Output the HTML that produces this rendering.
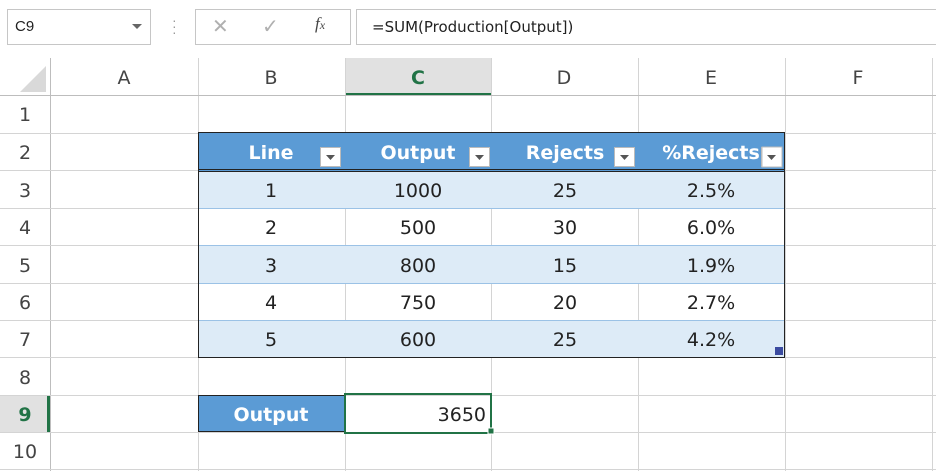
<!DOCTYPE html>
<html><head><style>
body{margin:0;width:936px;height:471px;background:#fff;font-family:"Liberation Sans",sans-serif;position:relative;overflow:hidden}
.a{position:absolute;box-sizing:border-box}
.t{font-family:"DejaVu Sans","Liberation Sans",sans-serif}
</style></head><body>
<div class="a" style="left:0;top:0;width:936px;height:56px;background:#fff"></div>
<div class="a" style="left:7px;top:9px;width:144px;height:36px;border:1px solid #c6c6c6"></div>
<div class="a" style="left:15px;top:18px;font-size:15px;color:#222">C9</div>
<div class="a" style="left:132px;top:24px;width:0;height:0;border-left:5px solid transparent;border-right:5px solid transparent;border-top:5px solid #666"></div>
<div class="a" style="left:172px;top:17px;color:#999;font-size:14px;line-height:6px">·<br>·<br>·</div>
<div class="a" style="left:195px;top:9px;width:156px;height:36px;border:1px solid #c6c6c6"></div>
<div class="a" style="left:212px;top:14px;font-size:20px;color:#b0b0b0">✕</div>
<div class="a" style="left:262px;top:14px;font-size:20px;color:#b0b0b0">✓</div>
<div class="a" style="left:315px;top:14px;font-size:17px;color:#444;font-style:italic;font-family:'Liberation Serif',serif">f<span style="font-size:12px">x</span></div>
<div class="a" style="left:356px;top:9px;width:590px;height:36px;border:1px solid #c6c6c6"></div>
<div class="a t" style="left:372px;top:18px;font-size:15px;color:#222">=SUM(Production[Output])</div>

<svg class="a" style="left:0;top:58px" width="936" height="413">
<rect x="0" y="0" width="936" height="38" fill="#fff"/>
<rect x="0" y="0" width="50" height="413" fill="#fff"/>
<polygon points="46,8 46,34 20,34" fill="#d9d9d9"/>
<rect x="345" y="0" width="146" height="38" fill="#e1e1e1"/>
<rect x="345" y="35" width="146" height="3" fill="#217346"/>
<rect x="0" y="337" width="50" height="37" fill="#e1e1e1"/>
<rect x="47" y="337" width="3" height="37" fill="#217346"/>
<g stroke="#d4d4d4" stroke-width="1">
<line x1="50.5" y1="0" x2="50.5" y2="413" stroke="#bdbdbd"/>
<line x1="198.5" y1="0" x2="198.5" y2="413"/><line x1="345.5" y1="0" x2="345.5" y2="413"/>
<line x1="491.5" y1="0" x2="491.5" y2="413"/><line x1="638.5" y1="0" x2="638.5" y2="413"/>
<line x1="785.5" y1="0" x2="785.5" y2="413"/><line x1="932.5" y1="0" x2="932.5" y2="413"/>
<line x1="0" y1="37.5" x2="936" y2="37.5" stroke="#bdbdbd"/>
<line x1="0" y1="75.5" x2="936" y2="75.5"/><line x1="0" y1="112.5" x2="936" y2="112.5"/>
<line x1="0" y1="150.5" x2="936" y2="150.5"/><line x1="0" y1="187.5" x2="936" y2="187.5"/>
<line x1="0" y1="225.5" x2="936" y2="225.5"/><line x1="0" y1="262.5" x2="936" y2="262.5"/>
<line x1="0" y1="299.5" x2="936" y2="299.5"/><line x1="0" y1="337.5" x2="936" y2="337.5"/>
<line x1="0" y1="374.5" x2="936" y2="374.5"/><line x1="0" y1="411.5" x2="936" y2="411.5"/>
</g>
<rect x="198" y="75" width="587" height="38" fill="#5b9bd5"/>
<rect x="198" y="113" width="587" height="37" fill="#ddebf7"/>
<rect x="198" y="188" width="587" height="37" fill="#ddebf7"/>
<rect x="198" y="263" width="587" height="37" fill="#ddebf7"/>
<g stroke="#9bc2e6"><line x1="198" y1="150.5" x2="785" y2="150.5"/><line x1="198" y1="187.5" x2="785" y2="187.5"/><line x1="198" y1="225.5" x2="785" y2="225.5"/><line x1="198" y1="262.5" x2="785" y2="262.5"/></g>
<line x1="198" y1="111.5" x2="785" y2="111.5" stroke="#222"/><line x1="198" y1="113.5" x2="785" y2="113.5" stroke="#222"/>
<rect x="198.5" y="74.5" width="586" height="225" fill="none" stroke="#222"/>
<rect x="775" y="289" width="8" height="8" fill="#3b4ba0"/>
<rect x="198.5" y="337.5" width="147" height="36" fill="#5b9bd5" stroke="#222"/>
<rect x="345" y="336" width="146" height="39" fill="none" stroke="#217346" stroke-width="2"/>
<rect x="488" y="370" width="6" height="6" fill="#217346" stroke="#fff"/>
<g fill="#fff" stroke="#bbb"><rect x="320.5" y="89.5" width="20" height="19"/><rect x="469.5" y="89.5" width="20" height="19"/><rect x="614.5" y="89.5" width="20" height="19"/><rect x="761.5" y="89.5" width="20" height="19"/></g>
<g fill="#555"><polygon points="326,97 335,97 330.5,102"/><polygon points="475,97 484,97 479.5,102"/><polygon points="620,97 629,97 624.5,102"/><polygon points="767,97 776,97 771.5,102"/></g>
<g font-family="DejaVu Sans,sans-serif" font-size="19" fill="#444" text-anchor="middle">
<text x="124" y="26">A</text><text x="271" y="26">B</text><text x="418" y="26" fill="#217346" font-weight="bold">C</text><text x="564" y="26">D</text><text x="711" y="26">E</text><text x="858" y="26">F</text>
<text x="25" y="63">1</text><text x="25" y="101">2</text><text x="25" y="139">3</text><text x="25" y="176">4</text><text x="25" y="214">5</text><text x="25" y="251">6</text><text x="25" y="288">7</text><text x="25" y="326">8</text><text x="25" y="363" fill="#217346" font-weight="bold">9</text><text x="25" y="400">10</text>
</g>
<g font-family="DejaVu Sans,sans-serif" font-size="19" fill="#fff" font-weight="bold" text-anchor="middle">
<text x="271" y="101">Line</text><text x="418" y="101">Output</text><text x="565" y="101">Rejects</text><text x="711" y="101">%Rejects</text>
<text x="271" y="363">Output</text></g>
<rect x="762" y="89" width="20" height="20" fill="#fff" stroke="#bbb"/><polygon points="767,97 776,97 771.5,102" fill="#555"/>
<g font-family="DejaVu Sans,sans-serif" font-size="19" fill="#222" text-anchor="middle">
<text x="271" y="139">1</text><text x="418" y="139">1000</text><text x="565" y="139">25</text><text x="711" y="139">2.5%</text>
<text x="271" y="176">2</text><text x="418" y="176">500</text><text x="565" y="176">30</text><text x="711" y="176">6.0%</text>
<text x="271" y="214">3</text><text x="418" y="214">800</text><text x="565" y="214">15</text><text x="711" y="214">1.9%</text>
<text x="271" y="251">4</text><text x="418" y="251">750</text><text x="565" y="251">20</text><text x="711" y="251">2.7%</text>
<text x="271" y="288">5</text><text x="418" y="288">600</text><text x="565" y="288">25</text><text x="711" y="288">4.2%</text>
<text x="486" y="363" text-anchor="end">3650</text></g>
</svg>
</body></html>
